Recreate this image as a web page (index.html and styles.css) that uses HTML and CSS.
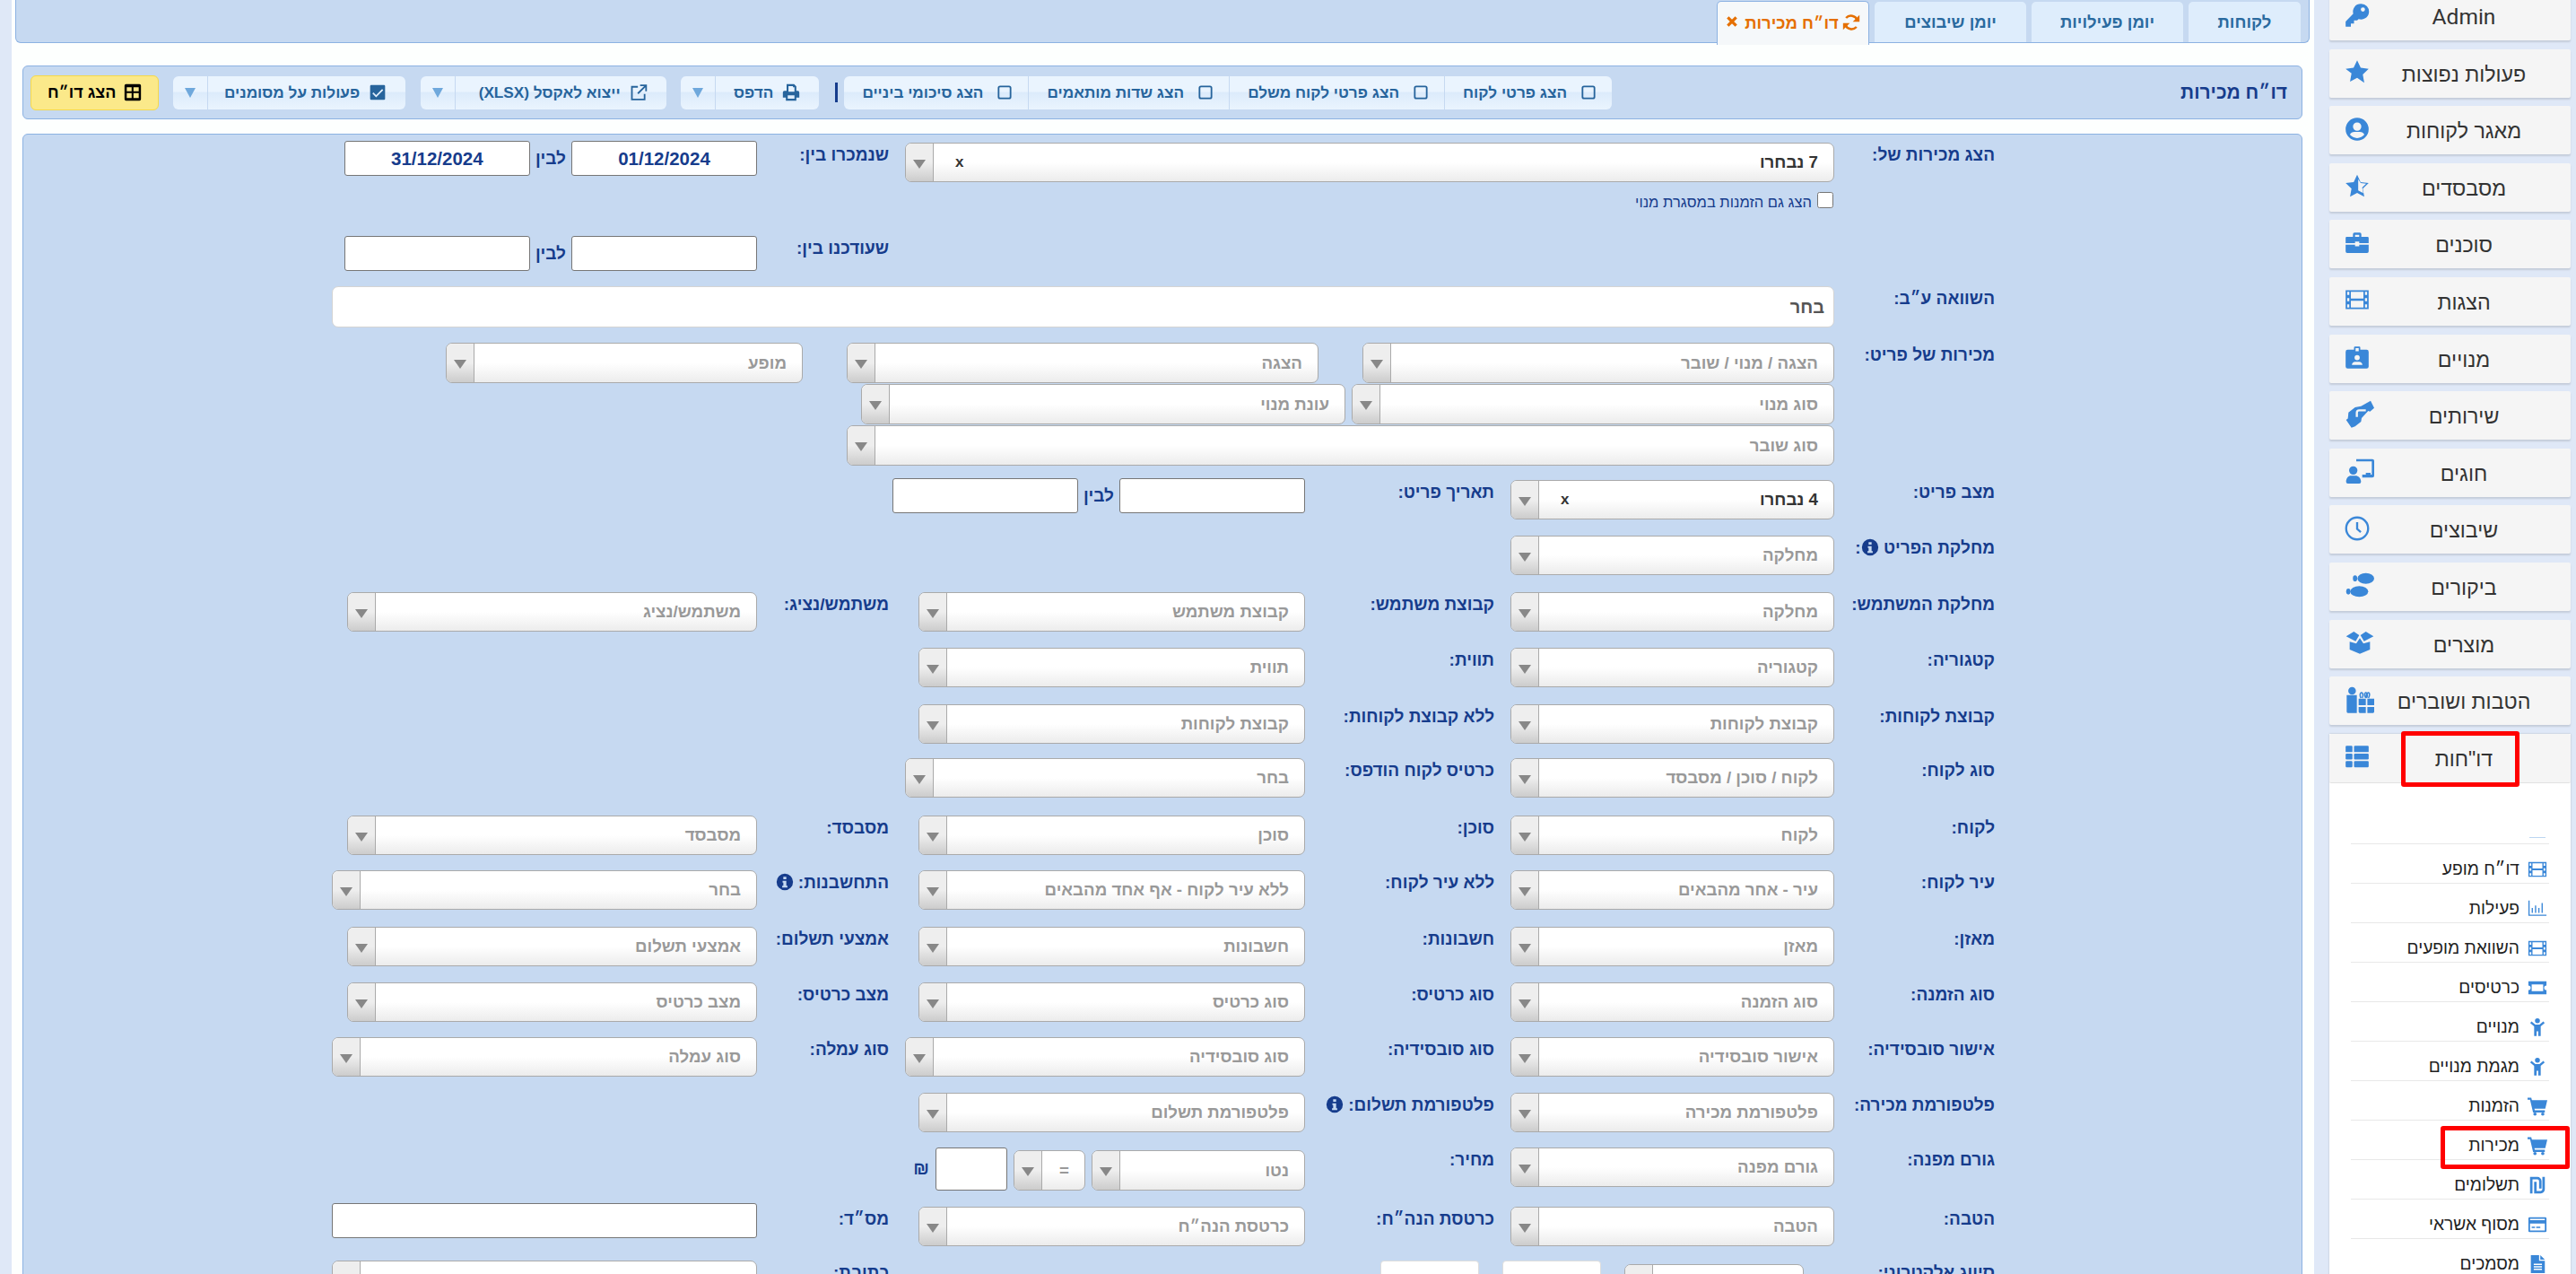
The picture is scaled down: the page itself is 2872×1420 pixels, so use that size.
FILE: index.html
```html
<!DOCTYPE html>
<html lang="he" dir="rtl">
<head>
    <meta charset="UTF-8">
    <title>דו״ח מכירות</title>
    <link rel="stylesheet" href="styles.css">
</head>
<body>
    <!-- icon sprite -->
    <svg class="sprite" xmlns="http://www.w3.org/2000/svg">
        <symbol id="i-key" viewBox="0 0 24 24"><path fill-rule="evenodd" d="M15.5 1a7.5 7.5 0 0 0-7.2 9.6L1 18v4.5a.5.5 0 0 0 .5.5H6v-3h3v-3h3l1.4-1.4A7.5 7.5 0 1 0 15.5 1zM17.5 4.5a2 2 0 1 1 0 4 2 2 0 0 1 0-4z"/></symbol>
        <symbol id="i-star" viewBox="0 0 24 24"><path d="M12 1l3.4 7.2 7.6 1-5.6 5.4 1.4 7.8L12 17.7l-6.8 3.7 1.4-7.8L1 9.2l7.6-1z"/></symbol>
        <symbol id="i-user" viewBox="0 0 24 24"><path fill-rule="evenodd" d="M12 1a11 11 0 1 0 0 22 11 11 0 0 0 0-22zM12 5.5a4 4 0 1 1 0 8 4 4 0 0 1 0-8zM12 20.5c-2.8 0-5.3-1.3-6.9-3.3.8-1.6 2.4-2.6 4.2-2.6h5.4c1.8 0 3.4 1 4.2 2.6-1.6 2-4.1 3.3-6.9 3.3z"/></symbol>
        <symbol id="i-star-half" viewBox="0 0 24 24"><path fill-rule="evenodd" d="M12 1.5l3.3 7 7.7 1-5.6 5.3 1.4 7.7-6.8-3.7-6.8 3.7 1.4-7.7L1 9.5l7.7-1zM13 5.8v10.6l4.8 2.6-1-5.2 3.8-3.7-5.2-.7z"/></symbol>
        <symbol id="i-case" viewBox="0 0 24 24"><path fill-rule="evenodd" d="M8 3.5A1.5 1.5 0 0 1 9.5 2h5A1.5 1.5 0 0 1 16 3.5V6h6a1 1 0 0 1 1 1v5H14v-1.5h-4V12H1V7a1 1 0 0 1 1-1h6zM10 4v2h4V4zM1 13.5h9V15h4v-1.5h9V20a1.5 1.5 0 0 1-1.5 1.5h-19A1.5 1.5 0 0 1 1 20z"/></symbol>
        <symbol id="i-film" viewBox="0 0 24 24"><path fill-rule="evenodd" d="M1 3h22v18H1zM2.5 4.5v3h2v-3zM2.5 10.5v3h2v-3zM2.5 16.5v3h2v-3zM19.5 4.5v3h2v-3zM19.5 10.5v3h2v-3zM19.5 16.5v3h2v-3zM6 4.5V11h12V4.5zM6 13v6.5h12V13z"/></symbol>
        <symbol id="i-badge" viewBox="0 0 24 24"><path fill-rule="evenodd" d="M3 5h6V3a1 1 0 0 1 1-1h4a1 1 0 0 1 1 1v2h6a2 2 0 0 1 2 2v14a2 2 0 0 1-2 2H3a2 2 0 0 1-2-2V7a2 2 0 0 1 2-2zM10.5 3.5v3h3v-3zM12 10a2.5 2.5 0 1 1 0 5 2.5 2.5 0 0 1 0-5zM7 19.5c0-1.8 1.5-3 3-3h4c1.5 0 3 1.2 3 3z"/></symbol>
        <symbol id="i-hands" viewBox="0 0 24 24"><path d="M13 5l8-4.500 3 6-3.500 3-1.500-.5-5.500 6-.5 3-5 4-3 1L.5 16.500l1.500-1.200.5-5L8 6z"/><path d="M17 8.500H11.500a2 2 0 0 0-2 2v3.500" fill="none" stroke="#f5f5f5" stroke-width="1.800"/></symbol>
        <symbol id="i-teacher" viewBox="0 0 24 24"><path fill-rule="evenodd" d="M9 2h13.500A1.500 1.500 0 0 1 24 3.500V16a1.500 1.500 0 0 1-1.500 1.500H14V15h3v-1.500h4V15h1V4H9zM6.500 8a3.500 3.500 0 1 1 0 7 3.500 3.500 0 0 1 0-7zM.5 21c0-3 2-5 4-5h4c2 0 4.500 2 4.500 5a1.500 1.500 0 0 1-1.500 1.500H2A1.500 1.500 0 0 1 .5 21z"/></symbol>
        <symbol id="i-clock" viewBox="0 0 24 24"><circle cx="12" cy="12" r="10.500" fill="none" stroke="currentColor" stroke-width="2"/><path d="M12 6v6.500l3.500 3" fill="none" stroke="currentColor" stroke-width="2"/></symbol>
        <symbol id="i-shoes" viewBox="0 0 24 24"><ellipse cx="17" cy="6.500" rx="7" ry="4.500"/><ellipse cx="8" cy="6.500" rx="1.800" ry="2.500"/><ellipse cx="11.500" cy="17.500" rx="7.500" ry="4.500"/><ellipse cx="2.400" cy="17.500" rx="1.800" ry="2.500"/></symbol>
        <symbol id="i-box" viewBox="0 0 24 24"><path d="M.5 7L7 3l4.500 3-3 5zM23.500 7L17 3l-4.500 3 3 5zM3.500 11.500l5.500 1.500 3-4.500 3 4.500 5.500-1.500V18L12 21.500 3.500 18z"/></symbol>
        <symbol id="i-gifts" viewBox="0 0 24 24"><path d="M1 8h8.500v15H2a1 1 0 0 1-1-1zM11 11h6v5.500h-6zM18.300 11H24v5.500h-5.700zM11 18h6v5h-5a1 1 0 0 1-1-1zM18.300 18H24v4a1 1 0 0 1-1 1h-4.700z"/><circle cx="5.500" cy="4.500" r="3.200"/><path d="M17 10.500c-1-1.500-1.500-4-.2-4.500 1.500-.4 2 2.500.8 4.500M18 10.500c-1-2-.5-4.500 1-4.500 1.500.1 1.300 3 .2 4.500M13 10.500c-1-1.500-1.200-4 .2-4.500 1.500-.3 1.800 3 .8 4.500" fill="none" stroke="currentColor" stroke-width="1.200"/></symbol>
        <symbol id="i-list" viewBox="0 0 24 24"><rect x="1" y="2" width="6.500" height="6" rx="1"/><rect x="9" y="2" width="14" height="6" rx="1"/><rect x="1" y="9.500" width="6.500" height="5.500" rx="1"/><rect x="9" y="9.500" width="14" height="5.500" rx="1"/><rect x="1" y="16.500" width="6.500" height="6" rx="1"/><rect x="9" y="16.500" width="14" height="6" rx="1"/></symbol>
        <symbol id="i-chart" viewBox="0 0 24 24"><path d="M1 2h1.500v17H23v1.500H1zM5 11h1.500v6H5zM9 8h1.500v9H9zM13 11h1.500v6H13zM17 5h1.500v12H17z"/></symbol>
        <symbol id="i-ticket" viewBox="0 0 24 24"><path fill-rule="evenodd" d="M1 4h22v5.200a2.800 2.800 0 0 0 0 5.600V20H1v-5.200a2.800 2.800 0 0 0 0-5.600zM5 8v8h14V8z"/></symbol>
        <symbol id="i-child" viewBox="0 0 24 24"><circle cx="12" cy="4" r="3"/><path d="M4.800 5l4.700 3.800h5L19.200 5l1.600 1.800L16 11v11.500h-3V17h-2v5.500H8V11L3.200 6.800z"/></symbol>
        <symbol id="i-cart" viewBox="0 0 24 24"><path d="M0 1.500h4.500l.8 3H24l-2.500 10.500H8.300l.5 2H21v2.500H6.700L3 4H0z"/><circle cx="9" cy="21.500" r="2"/><circle cx="18.500" cy="21.500" r="2"/></symbol>
        <symbol id="i-shekel" viewBox="0 0 24 24"><path d="M3 2h9a5 5 0 0 1 5 5v9h-3V7a2 2 0 0 0-2-2H6v17H3zM21 2v15a5 5 0 0 1-5 5H8V8h3v11h5a2 2 0 0 0 2-2V2z"/></symbol>
        <symbol id="i-card" viewBox="0 0 24 24"><path fill-rule="evenodd" d="M2.500 3h19A1.500 1.500 0 0 1 23 4.500v15a1.500 1.500 0 0 1-1.500 1.500h-19A1.500 1.500 0 0 1 1 19.500v-15A1.500 1.500 0 0 1 2.500 3zM3 5v1.500h18V5zM3 10.500V19h18v-8.500zM5 14.500h4V16H5zM10.500 14.500h5V16h-5z"/></symbol>
        <symbol id="i-file" viewBox="0 0 24 24"><path fill-rule="evenodd" d="M4 1h10v7h7v15H4zM15.500 1L21 6.500h-5.500zM7.500 11.500h10V13h-10zM7.500 14.500h10V16h-10zM7.500 17.500h10V19h-10z"/></symbol>
        <symbol id="i-box-empty" viewBox="0 0 24 24"><rect x="4" y="4" width="16" height="16" rx="2" fill="none" stroke="currentColor" stroke-width="2.200"/></symbol>
        <symbol id="i-print" viewBox="0 0 24 24"><path fill-rule="evenodd" d="M6 1h10l3 3v6h2a2 2 0 0 1 2 2v7h-4v4H5v-4H1v-7a2 2 0 0 1 2-2h3zM8.500 3.500V11h8V5h-2V3.500zM7.500 16v4.500h9V16z"/></symbol>
        <symbol id="i-external" viewBox="0 0 24 24"><path d="M11 4.500H3v17h17V14M14 2.500h8v8M22 2.500L11 13.500" fill="none" stroke="currentColor" stroke-width="2.200"/></symbol>
        <symbol id="i-check" viewBox="0 0 24 24"><path fill-rule="evenodd" d="M3.500 2h17A1.500 1.500 0 0 1 22 3.500v17a1.500 1.500 0 0 1-1.500 1.500h-17A1.500 1.500 0 0 1 2 20.500v-17A1.500 1.500 0 0 1 3.500 2zM18 7.500L10 15.500 6.500 12 5 13.500l5 5 9.500-9.500z"/></symbol>
        <symbol id="i-grid" viewBox="0 0 24 24"><path fill-rule="evenodd" d="M3 1h18a2 2 0 0 1 2 2v18a2 2 0 0 1-2 2H3a2 2 0 0 1-2-2V3a2 2 0 0 1 2-2zM4 5v5.500h6.500V5zM13 5v5.500h7V5zM4 13v6.500h6.500V13zM13 13v6.500h7V13z"/></symbol>
        <symbol id="i-sync" viewBox="0 0 24 24"><path d="M20 9A9 9 0 0 0 5 6M4 15a9 9 0 0 0 15 3" fill="none" stroke="currentColor" stroke-width="3"/><path d="M23 2v9h-9zM1 22v-9h9z"/></symbol>
        <symbol id="i-x" viewBox="0 0 24 24"><path d="M4 4l16 16M20 4L4 20" fill="none" stroke="currentColor" stroke-width="5.500"/></symbol>
        <symbol id="i-info" viewBox="0 0 24 24"><path fill-rule="evenodd" d="M12 1a11 11 0 1 0 0 22 11 11 0 0 0 0-22zM10 5h4v3.500h-4zM9 10.500h5v6.500h1.500v2.500h-7V17H10v-4H9z"/></symbol>
    </svg>

    <div class="page">
        <aside class="sidebar">
            <div class="side-btn"><span class="side-text side-latin">Admin</span><span class="side-icon"><svg class="ic"><use href="#i-key"/></svg></span></div>
            <div class="side-btn"><span class="side-text">פעולות נפוצות</span><span class="side-icon"><svg class="ic"><use href="#i-star"/></svg></span></div>
            <div class="side-btn"><span class="side-text">מאגר לקוחות</span><span class="side-icon"><svg class="ic"><use href="#i-user"/></svg></span></div>
            <div class="side-btn"><span class="side-text">מסבסדים</span><span class="side-icon"><svg class="ic"><use href="#i-star-half"/></svg></span></div>
            <div class="side-btn"><span class="side-text">סוכנים</span><span class="side-icon"><svg class="ic"><use href="#i-case"/></svg></span></div>
            <div class="side-btn"><span class="side-text">הצגות</span><span class="side-icon"><svg class="ic"><use href="#i-film"/></svg></span></div>
            <div class="side-btn"><span class="side-text">מנויים</span><span class="side-icon"><svg class="ic"><use href="#i-badge"/></svg></span></div>
            <div class="side-btn"><span class="side-text">שירותים</span><span class="side-icon"><svg class="ic ic-wide"><use href="#i-hands"/></svg></span></div>
            <div class="side-btn"><span class="side-text">חוגים</span><span class="side-icon"><svg class="ic ic-wide"><use href="#i-teacher"/></svg></span></div>
            <div class="side-btn"><span class="side-text">שיבוצים</span><span class="side-icon"><svg class="ic"><use href="#i-clock"/></svg></span></div>
            <div class="side-btn"><span class="side-text">ביקורים</span><span class="side-icon"><svg class="ic ic-wide"><use href="#i-shoes"/></svg></span></div>
            <div class="side-btn"><span class="side-text">מוצרים</span><span class="side-icon"><svg class="ic ic-wide"><use href="#i-box"/></svg></span></div>
            <div class="side-btn"><span class="side-text">הטבות ושוברים</span><span class="side-icon"><svg class="ic ic-wide"><use href="#i-gifts"/></svg></span></div>
            <div class="accordion">
                <div class="side-btn side-open"><span class="side-text">דו"חות</span><span class="side-icon"><svg class="ic"><use href="#i-list"/></svg></span></div>
                <div class="sublist">
                    <div class="sublist-head"><span class="sublist-dash"></span></div>
                    <div class="sub-item"><svg class="sub-ic"><use href="#i-film"/></svg>דו״ח מופע</div>
                    <div class="sub-item"><svg class="sub-ic"><use href="#i-chart"/></svg>פעילות</div>
                    <div class="sub-item"><svg class="sub-ic"><use href="#i-film"/></svg>השוואת מופעים</div>
                    <div class="sub-item"><svg class="sub-ic"><use href="#i-ticket"/></svg>כרטיסים</div>
                    <div class="sub-item"><svg class="sub-ic"><use href="#i-child"/></svg>מנויים</div>
                    <div class="sub-item"><svg class="sub-ic"><use href="#i-child"/></svg>מגמת מנויים</div>
                    <div class="sub-item"><svg class="sub-ic"><use href="#i-cart"/></svg>הזמנות</div>
                    <div class="sub-item"><svg class="sub-ic"><use href="#i-cart"/></svg>מכירות</div>
                    <div class="sub-item"><svg class="sub-ic"><use href="#i-shekel"/></svg>תשלומים</div>
                    <div class="sub-item"><svg class="sub-ic"><use href="#i-card"/></svg>מסוף אשראי</div>
                    <div class="sub-item"><svg class="sub-ic"><use href="#i-file"/></svg>מסמכים</div>
                </div>
            </div>
            <!-- red annotations on the screenshot -->
            <div class="mark mark-reports"></div>
            <div class="mark mark-sales"></div>
        </aside>

        <main class="main">
            <nav class="tabs">
                <div class="tab">לקוחות</div>
                <div class="tab">יומן פעילויות</div>
                <div class="tab">יומן שיבוצים</div>
                <div class="tab tab-active"><svg class="tab-sync"><use href="#i-sync"/></svg>דו״ח מכירות<svg class="tab-x"><use href="#i-x"/></svg></div>
            </nav>

            <section class="toolbar">
                <div class="toolbar-title">דו״ח מכירות</div>
                <div class="toolbar-btns">
                    <div class="btn-set">
                        <div class="tbtn"><svg class="tb-ic"><use href="#i-box-empty"/></svg>הצג פרטי לקוח</div>
                        <div class="tbtn"><svg class="tb-ic"><use href="#i-box-empty"/></svg>הצג פרטי לקוח משלם</div>
                        <div class="tbtn"><svg class="tb-ic"><use href="#i-box-empty"/></svg>הצג שדות מותאמים</div>
                        <div class="tbtn"><svg class="tb-ic"><use href="#i-box-empty"/></svg>הצג סיכומי ביניים</div>
                    </div>
                    <div class="tb-sep"></div>
                    <div class="btn-set">
                        <div class="tbtn tbtn-action"><svg class="tb-ic"><use href="#i-print"/></svg>הדפס</div>
                        <div class="tbtn tb-drop"><i class="tb-arrow"></i></div>
                    </div>
                    <div class="btn-set">
                        <div class="tbtn tbtn-action tbtn-excel"><svg class="tb-ic"><use href="#i-external"/></svg>ייצוא לאקסל (XLSX)</div>
                        <div class="tbtn tb-drop"><i class="tb-arrow"></i></div>
                    </div>
                    <div class="btn-set">
                        <div class="tbtn tbtn-action tbtn-marked"><svg class="tb-ic"><use href="#i-check"/></svg>פעולות על מסומנים</div>
                        <div class="tbtn tb-drop"><i class="tb-arrow"></i></div>
                    </div>
                    <div class="tbtn-show"><svg class="tb-ic"><use href="#i-grid"/></svg>הצג דו״ח</div>
                </div>
            </section>

            <section class="form-panel">
                <div class="form-grid">
                    <div class="row">
                        <label class="lbl">הצג מכירות של:</label>
                        <div class="span3">
                            <div class="sel"><span class="val">7 נבחרו</span><span class="clear">x</span><span class="arrow"></span></div>
                            <div class="check-line"><input type="checkbox"><span>הצג גם הזמנות במסגרת מנוי</span></div>
                        </div>
                        <label class="lbl lbl-far">שנמכרו בין:</label>
                        <div class="dates"><input class="date" value="01/12/2024"><span class="bein">לבין</span><input class="date" value="31/12/2024"></div>
                    </div>
                    <div class="row">
                        <label class="lbl lbl-far col5">שעודכנו בין:</label>
                        <div class="dates dates-flat"><input class="date"><span class="bein">לבין</span><input class="date"></div>
                    </div>
                    <div class="row">
                        <label class="lbl">השוואה ע״ב:</label>
                        <div class="span5"><div class="sel sel-flat"><span class="val val-grey">בחר</span></div></div>
                    </div>
                    <div class="row">
                        <label class="lbl">מכירות של פריט:</label>
                        <div class="span5 multi">
                            <div class="multi-line multi-wide">
                                <div class="sel sel-526"><span class="ph">הצגה / מנוי / שובר</span><span class="arrow"></span></div>
                                <div class="sel sel-526"><span class="ph">הצגה</span><span class="arrow"></span></div>
                                <div class="sel sel-398"><span class="ph">מופע</span><span class="arrow"></span></div>
                            </div>
                            <div class="multi-line">
                                <div class="sel sel-538"><span class="ph">סוג מנוי</span><span class="arrow"></span></div>
                                <div class="sel sel-540"><span class="ph">עונת מנוי</span><span class="arrow"></span></div>
                            </div>
                            <div class="multi-line">
                                <div class="sel sel-1101"><span class="ph">סוג שובר</span><span class="arrow"></span></div>
                            </div>
                        </div>
                    </div>
                    <div class="row">
                        <label class="lbl">מצב פריט:</label>
                        <div class="sel"><span class="val">4 נבחרו</span><span class="clear">x</span><span class="arrow"></span></div>
                        <label class="lbl lbl-mid">תאריך פריט:</label>
                        <div class="dates"><input class="date"><span class="bein">לבין</span><input class="date"></div>
                    </div>
                    <div class="row">
                        <label class="lbl">מחלקת הפריט <svg class="info"><use href="#i-info"/></svg>:</label>
                        <div class="sel"><span class="ph">מחלקה</span><span class="arrow"></span></div>
                    </div>
                    <div class="row">
                        <label class="lbl">מחלקת המשתמש:</label>
                        <div class="sel"><span class="ph">מחלקה</span><span class="arrow"></span></div>
                        <label class="lbl lbl-mid">קבוצת משתמש:</label>
                        <div class="sel sel-mid"><span class="ph">קבוצת משתמש</span><span class="arrow"></span></div>
                        <label class="lbl lbl-far">משתמש/נציג:</label>
                        <div class="sel sel-far"><span class="ph">משתמש/נציג</span><span class="arrow"></span></div>
                    </div>
                    <div class="row">
                        <label class="lbl">קטגוריה:</label>
                        <div class="sel"><span class="ph">קטגוריה</span><span class="arrow"></span></div>
                        <label class="lbl lbl-mid">תווית:</label>
                        <div class="sel sel-mid"><span class="ph">תווית</span><span class="arrow"></span></div>
                    </div>
                    <div class="row">
                        <label class="lbl">קבוצת לקוחות:</label>
                        <div class="sel"><span class="ph">קבוצת לקוחות</span><span class="arrow"></span></div>
                        <label class="lbl lbl-mid">ללא קבוצת לקוחות:</label>
                        <div class="sel sel-mid"><span class="ph">קבוצת לקוחות</span><span class="arrow"></span></div>
                    </div>
                    <div class="row">
                        <label class="lbl">סוג לקוח:</label>
                        <div class="sel"><span class="ph">לקוח / סוכן / מסבסד</span><span class="arrow"></span></div>
                        <label class="lbl lbl-mid">כרטיס לקוח הודפס:</label>
                        <div class="sel"><span class="ph">בחר</span><span class="arrow"></span></div>
                    </div>
                    <div class="row">
                        <label class="lbl">לקוח:</label>
                        <div class="sel"><span class="ph">לקוח</span><span class="arrow"></span></div>
                        <label class="lbl lbl-mid">סוכן:</label>
                        <div class="sel sel-mid"><span class="ph">סוכן</span><span class="arrow"></span></div>
                        <label class="lbl lbl-far">מסבסד:</label>
                        <div class="sel sel-far"><span class="ph">מסבסד</span><span class="arrow"></span></div>
                    </div>
                    <div class="row">
                        <label class="lbl">עיר לקוח:</label>
                        <div class="sel"><span class="ph">עיר - אחר מהבאים</span><span class="arrow"></span></div>
                        <label class="lbl lbl-mid">ללא עיר לקוח:</label>
                        <div class="sel sel-mid"><span class="ph">ללא עיר לקוח - אף אחד מהבאים</span><span class="arrow"></span></div>
                        <label class="lbl lbl-far">התחשבנות: <svg class="info"><use href="#i-info"/></svg></label>
                        <div class="sel"><span class="ph">בחר</span><span class="arrow"></span></div>
                    </div>
                    <div class="row">
                        <label class="lbl">מאזן:</label>
                        <div class="sel"><span class="ph">מאזן</span><span class="arrow"></span></div>
                        <label class="lbl lbl-mid">חשבונות:</label>
                        <div class="sel sel-mid"><span class="ph">חשבונות</span><span class="arrow"></span></div>
                        <label class="lbl lbl-far">אמצעי תשלום:</label>
                        <div class="sel sel-far"><span class="ph">אמצעי תשלום</span><span class="arrow"></span></div>
                    </div>
                    <div class="row">
                        <label class="lbl">סוג הזמנה:</label>
                        <div class="sel"><span class="ph">סוג הזמנה</span><span class="arrow"></span></div>
                        <label class="lbl lbl-mid">סוג כרטיס:</label>
                        <div class="sel sel-mid"><span class="ph">סוג כרטיס</span><span class="arrow"></span></div>
                        <label class="lbl lbl-far">מצב כרטיס:</label>
                        <div class="sel sel-far"><span class="ph">מצב כרטיס</span><span class="arrow"></span></div>
                    </div>
                    <div class="row">
                        <label class="lbl">אישור סובסידיה:</label>
                        <div class="sel"><span class="ph">אישור סובסידיה</span><span class="arrow"></span></div>
                        <label class="lbl lbl-mid">סוג סובסידיה:</label>
                        <div class="sel"><span class="ph">סוג סובסידיה</span><span class="arrow"></span></div>
                        <label class="lbl lbl-far">סוג עמלה:</label>
                        <div class="sel"><span class="ph">סוג עמלה</span><span class="arrow"></span></div>
                    </div>
                    <div class="row">
                        <label class="lbl">פלטפורמת מכירה:</label>
                        <div class="sel"><span class="ph">פלטפורמת מכירה</span><span class="arrow"></span></div>
                        <label class="lbl lbl-mid">פלטפורמת תשלום: <svg class="info"><use href="#i-info"/></svg></label>
                        <div class="sel sel-mid"><span class="ph">פלטפורמת תשלום</span><span class="arrow"></span></div>
                    </div>
                    <div class="row">
                        <label class="lbl">גורם מפנה:</label>
                        <div class="sel"><span class="ph">גורם מפנה</span><span class="arrow"></span></div>
                        <label class="lbl lbl-mid">מחיר:</label>
                        <div class="price">
                            <div class="sel sel-238"><span class="ph">נטו</span><span class="arrow"></span></div>
                            <div class="sel sel-80"><span class="ph">=</span><span class="arrow"></span></div>
                            <input class="date date-80">
                            <span class="nis">₪</span>
                        </div>
                    </div>
                    <div class="row">
                        <label class="lbl">הטבה:</label>
                        <div class="sel"><span class="ph">הטבה</span><span class="arrow"></span></div>
                        <label class="lbl lbl-mid">כרטסת הנה״ח:</label>
                        <div class="sel sel-mid"><span class="ph">כרטסת הנה״ח</span><span class="arrow"></span></div>
                        <label class="lbl lbl-far">מס״ד:</label>
                        <input class="date date-full">
                    </div>
                    <div class="row">
                        <label class="lbl">סיווג אלקטרוני:</label>
                        <div class="span3 last-line">
                            <div class="sel sel-200"><span class="arrow"></span></div>
                            <div class="soft-input"></div>
                            <div class="soft-input"></div>
                        </div>
                        <label class="lbl lbl-far">כתובת:</label>
                        <div class="sel"><span class="arrow"></span></div>
                    </div>
                </div>
            </section>
        </main>
    </div>
</body>
</html>
```

FILE: styles.css
```css
html, body {
    margin: 0;
    padding: 0;
    height: 1420px;
    overflow: hidden;
}
body {
    font-family: "Liberation Sans", "Noto Sans", sans-serif;
    background-color: #dfe8f7;
    color: #333;
}
.sprite {
    display: none;
}
.page {
    display: flex;
    height: 1420px;
    overflow: hidden;
}

/* sidebar */
.sidebar {
    position: relative;
    width: 292px;
    flex: none;
    box-sizing: border-box;
    padding: 0 6px 0 17px;
    margin-top: -9px;
    display: flex;
    flex-direction: column;
    gap: 9.6px;
}
.side-btn {
    display: flex;
    align-items: center;
    height: 54px;
    flex: none;
    background-color: #f5f5f5;
    border-radius: 2px;
    box-shadow: 0 2px 2px rgba(0, 0, 0, 0.12);
}
.side-text {
    flex: 1;
    text-align: center;
    font-size: 23.2px;
    color: #333;
    margin-left: -31px;
    padding-top: 3px;
}
.side-latin {
    font-family: Roboto, "Liberation Sans", sans-serif;
    font-size: 24.5px;
    padding-top: 0;
}
.side-icon {
    flex: none;
    width: 62px;
    display: flex;
    justify-content: center;
    color: #3a87d8;
    margin-top: -3px;
}
.ic {
    width: 28px;
    height: 28px;
    flex: none;
    fill: currentColor;
}
.ic-wide {
    width: 32px;
    height: 32px;
    margin-left: 5px;
}
.accordion {
    flex: 1;
    background-color: #fff;
    box-shadow: 0 0 2px rgba(0, 0, 0, 0.2);
}
.side-open {
    border-bottom: 1px solid #e2e2e2;
    box-shadow: none;
}
.sublist {
    padding: 0 24px;
}
.sublist-head {
    position: relative;
    height: 68px;
    border-bottom: 1px solid #e8e8e8;
    box-sizing: border-box;
}
.sublist-dash {
    position: absolute;
    right: 4px;
    bottom: 6px;
    width: 18px;
    height: 1px;
    background-color: #bcd6f2;
}
.sub-item {
    display: flex;
    align-items: center;
    gap: 9px;
    height: 44px;
    box-sizing: border-box;
    padding: 14px 2px 0 0;
    border-bottom: 1px solid #e8e8e8;
    font-size: 19.2px;
    color: #222;
}
.sub-ic {
    width: 22px;
    height: 22px;
    flex: none;
    fill: #3a87d8;
    color: #3a87d8;
}
.mark {
    position: absolute;
    box-sizing: border-box;
    border: 5px solid #f00;
    border-radius: 3px;
}
.mark-reports {
    left: 97px;
    top: 824px;
    width: 132px;
    height: 62px;
}
.mark-sales {
    left: 141px;
    top: 1264px;
    width: 144px;
    height: 48px;
}

/* main column */
.main {
    flex: 1;
    margin-left: 13px;
    background-color: #fdfffe;
    min-width: 0;
}
.tabs {
    display: flex;
    gap: 6px;
    height: 48px;
    box-sizing: border-box;
    margin: 0 5px 0 4px;
    padding: 2px 9px 0 0;
    background-color: #c6d9f1;
    border: 1px solid #8cb2e2;
    border-top: 0;
    border-radius: 0 0 6px 6px;
}
.tab {
    width: 125px;
    display: flex;
    align-items: center;
    justify-content: center;
    background-color: #deedfc;
    color: #2a6a9f;
    font-size: 18.5px;
    font-weight: bold;
    border-radius: 5px 5px 0 0;
}
.tab:nth-child(2), .tab:nth-child(3) {
    width: 169px;
}
.tab-active {
    width: 170px;
    height: 49px;
    margin-top: -1px;
    box-sizing: border-box;
    gap: 4px;
    background-color: #f5f8fa;
    border: 1px solid #8cb2e2;
    border-bottom: 0;
    color: #e56f00;
    flex: none;
}
.tab-sync {
    width: 20px;
    height: 20px;
    fill: currentColor;
    color: #e56f00;
    margin-top: -2px;
}
.tab-x {
    width: 14px;
    height: 14px;
    color: #e56f00;
    margin-right: 3px;
    margin-top: -4px;
}
.toolbar {
    display: flex;
    align-items: center;
    justify-content: space-between;
    height: 60px;
    box-sizing: border-box;
    margin: 25px 13px 0 12px;
    padding: 0 16px 0 8px;
    background-color: #c6d9f1;
    border: 1px solid #8cb2e2;
    border-radius: 6px;
}
.toolbar-title {
    font-size: 21px;
    font-weight: bold;
    color: #163c8c;
}
.toolbar-btns {
    display: flex;
    align-items: center;
    gap: 16.5px;
}
.btn-set {
    display: flex;
    height: 37px;
    border-radius: 6px;
    overflow: hidden;
    gap: 1px;
    background-color: #c6d9f1;
}
.tbtn {
    display: flex;
    align-items: center;
    gap: 14px;
    padding: 0 16px 0 20px;
    background: linear-gradient(#eaf4fe, #eaf4fe 45%, #dcebfb 50%, #eaf4fe 100%);
    color: #27649c;
    font-size: 17.2px;
    font-weight: bold;
}
.tbtn-action {
    gap: 10px;
    padding-right: 21px;
}
.tbtn-excel {
    padding-left: 26px;
}
.tbtn-marked {
    padding-left: 18px;
}
.tb-drop {
    padding: 0;
    width: 38px;
    justify-content: center;
}
.tb-arrow {
    display: block;
    border: 6px solid transparent;
    border-top: 11px solid #6fa8dc;
    border-bottom: 0;
}
.tb-ic {
    width: 20px;
    height: 20px;
    fill: currentColor;
    color: #27649c;
    flex: none;
}
.tb-sep {
    width: 3px;
    height: 22px;
    margin: 0 -9px 0 1px;
    background-color: #163c8c;
}
.tbtn-show {
    display: flex;
    align-items: center;
    gap: 8px;
    height: 39px;
    box-sizing: border-box;
    padding: 0 18px;
    background-color: #fbe98a;
    border: 1px solid #f5d94a;
    border-radius: 6px;
    color: #000;
    font-size: 18px;
    font-weight: bold;
}
.tbtn-show .tb-ic {
    color: #000;
}

/* form */
.form-panel {
    margin: 16px 13px 0 12px;
    padding: 9px 342px 0 0;
    background-color: #c6d9f1;
    border: 1px solid #8cb2e2;
    border-radius: 6px 6px 0 0;
    height: 1400px;
    box-sizing: border-box;
}
.form-grid {
    display: grid;
    grid-template-rows: 104px 56px 63px 153px 62px 63px 62px 63px 60px 64px 61px 63px 62px 61px 62px 61px 66px 60px;
}
.row {
    display: grid;
    grid-template-columns: 179px 361px 229px 446px 165px 474px;
    align-items: start;
}
.span3 {
    grid-column: span 3;
}
.span5 {
    grid-column: span 5;
}
.col5 {
    grid-column: 5;
}
.lbl {
    display: block;
    padding-top: 3px;
    font-size: 19px;
    line-height: 22px;
    font-weight: bold;
    color: #163c8c;
    white-space: nowrap;
}
.lbl-mid, .lbl-far {
    padding-right: 18px;
}
.info {
    width: 20px;
    height: 20px;
    fill: #163c8c;
    vertical-align: -3px;
}
.sel {
    display: flex;
    align-items: center;
    height: 44px;
    box-sizing: border-box;
    width: 100%;
    background: linear-gradient(#fff, #fff 50%, #ececec);
    border: 1px solid #aaa;
    border-radius: 7px;
    overflow: hidden;
    flex: none;
}
.sel-mid {
    width: 431px;
}
.sel-far {
    width: 457px;
}
.sel-flat {
    height: 46px;
    background: #fff;
    border-color: #d4d4d4;
}
.sel-526 {
    width: 526px;
}
.sel-398 {
    width: 398px;
}
.sel-538 {
    width: 538px;
}
.sel-540 {
    width: 540px;
}
.sel-1101 {
    width: 1101px;
}
.sel-238 {
    width: 238px;
}
.sel-80 {
    width: 80px;
}
.sel-200 {
    width: 200px;
    margin: 4px 34px 0 0;
}
.ph, .val {
    flex: 1;
    padding-right: 17px;
    font-size: 18.7px;
    font-weight: bold;
    color: #999;
    white-space: nowrap;
}
.val {
    color: #333;
}
.val-grey {
    color: #555;
    padding-right: 10px;
    font-size: 20px;
}
.clear {
    padding-left: 24px;
    font-size: 17px;
    font-weight: bold;
    color: #333;
}
.arrow {
    display: flex;
    align-items: center;
    justify-content: center;
    flex: none;
    width: 31px;
    height: 100%;
    box-sizing: border-box;
    background: linear-gradient(#eee, #eee 50%, #ccc);
    border-right: 1px solid #aaa;
    margin-right: auto;
}
.arrow::after {
    content: "";
    border: 7px solid transparent;
    border-top: 10px solid #888;
    border-bottom: 0;
    margin-top: 3px;
}
.check-line {
    display: flex;
    align-items: center;
    gap: 6px;
    margin-top: 7px;
    font-size: 16.5px;
    color: #163c8c;
}
.check-line input {
    width: 18px;
    height: 18px;
    margin: 0 1px 0 0;
}
.check-line span {
    padding-top: 6px;
}
.dates {
    display: flex;
    align-items: center;
    gap: 6px;
    margin-top: -2px;
    white-space: nowrap;
}
.dates-flat {
    margin-top: 0;
}
.date {
    width: 207px;
    height: 39px;
    flex: none;
    box-sizing: border-box;
    border: 1px solid #767676;
    border-radius: 3px;
    background-color: #fff;
    text-align: center;
    font-family: inherit;
    font-size: 20.5px;
    font-weight: bold;
    color: #163c8c;
    padding: 0;
}
.bein {
    font-size: 19px;
    font-weight: bold;
    color: #163c8c;
}
.date-80 {
    width: 80px;
    height: 48px;
    margin-top: -3px;
}
.date-full {
    width: 100%;
    margin-top: -4px;
}
.multi {
    display: flex;
    flex-direction: column;
    gap: 1px;
}
.multi-line {
    display: flex;
    gap: 7px;
}
.multi-wide {
    gap: 49px;
}
.multi .sel {
    height: 45px;
}
.price {
    display: flex;
    align-items: flex-start;
    gap: 7px;
    padding-top: 3px;
}
.price .sel {
    height: 45px;
}
.nis {
    font-size: 20px;
    font-weight: bold;
    color: #163c8c;
    margin: 9px 0 0 0;
}
.last-line {
    display: flex;
    gap: 26px;
}
.soft-input {
    width: 110px;
    height: 44px;
    flex: none;
    background-color: #fff;
    border: 1px solid #ddd;
    border-radius: 4px;
    box-sizing: border-box;
}
```
